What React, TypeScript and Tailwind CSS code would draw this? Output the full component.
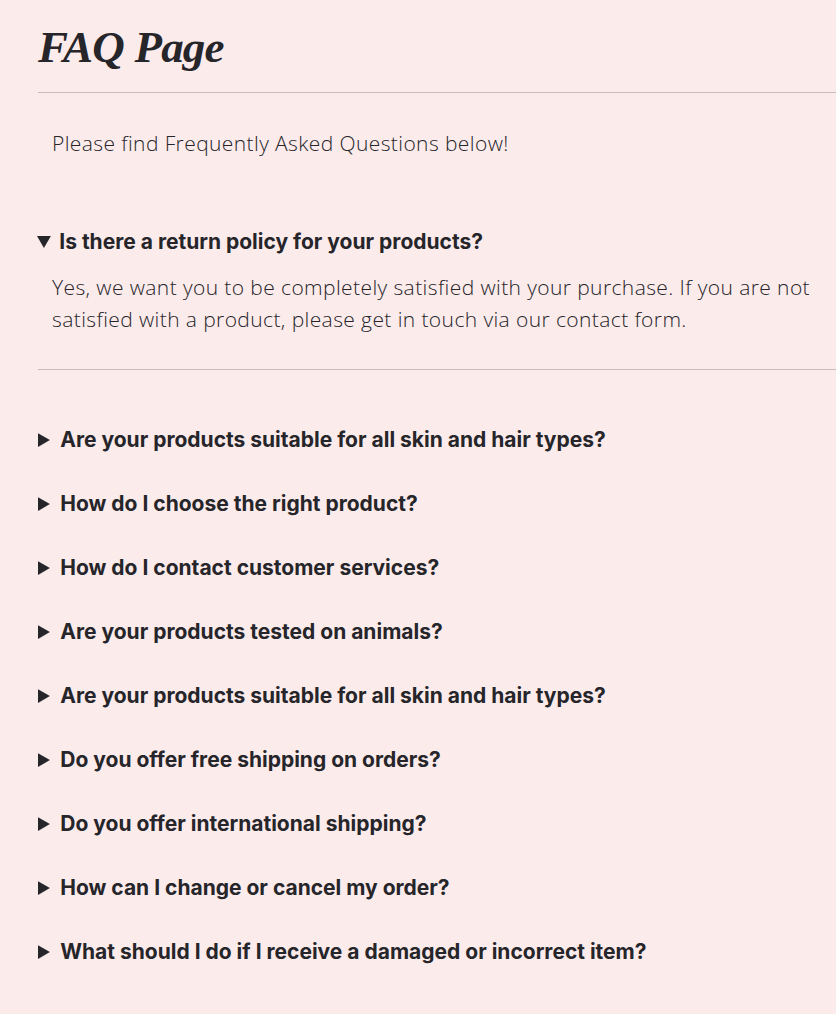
const questions = [
  "Are your products suitable for all skin and hair types?",
  "How do I choose the right product?",
  "How do I contact customer services?",
  "Are your products tested on animals?",
  "Are your products suitable for all skin and hair types?",
  "Do you offer free shipping on orders?",
  "Do you offer international shipping?",
  "How can I change or cancel my order?",
  "What should I do if I receive a damaged or incorrect item?",
];

const bodyFont = "font-['Open_Sans',sans-serif] font-light text-[21px] leading-[32px] tracking-[0.4px]";
const qFont = "font-['Inter',sans-serif] font-bold text-[21px] leading-[32px] cursor-pointer";

export default function App() {
  return (
    <div className="min-h-screen bg-[#fcebeb] text-[#25252a] pl-[38px] overflow-hidden">
      {/* Header */}
      <h1 className="pt-[22px] h-[92px] font-['Liberation_Serif',serif] italic font-bold text-[45px] leading-[50px] tracking-[-0.8px]">
        FAQ Page
      </h1>
      <hr className="border-t border-[#c9bcbc]" />

      <p className={`${bodyFont} pl-[14px] mt-[34px]`}>
        Please find Frequently Asked Questions below!
      </p>

      {/* Open item */}
      <details open className="mt-[67px]">
        <summary className={`${qFont} -ml-px`}>Is there a return policy for your products?</summary>
        <p className={`${bodyFont} pl-[14px] pt-[13px] pr-[8px]`}>
          Yes, we want you to be completely satisfied with your purchase. If you are not satisfied with a product, please get in touch via our contact form.
        </p>
      </details>
      <hr className="border-t border-[#c9bcbc] mt-[34px]" />

      {/* Closed items */}
      <div className="flex flex-col gap-[32px] mt-[54px]">
        {questions.map((q, i) => (
          <details key={i}>
            <summary className={qFont}>{q}</summary>
          </details>
        ))}
      </div>
    </div>
  );
}
